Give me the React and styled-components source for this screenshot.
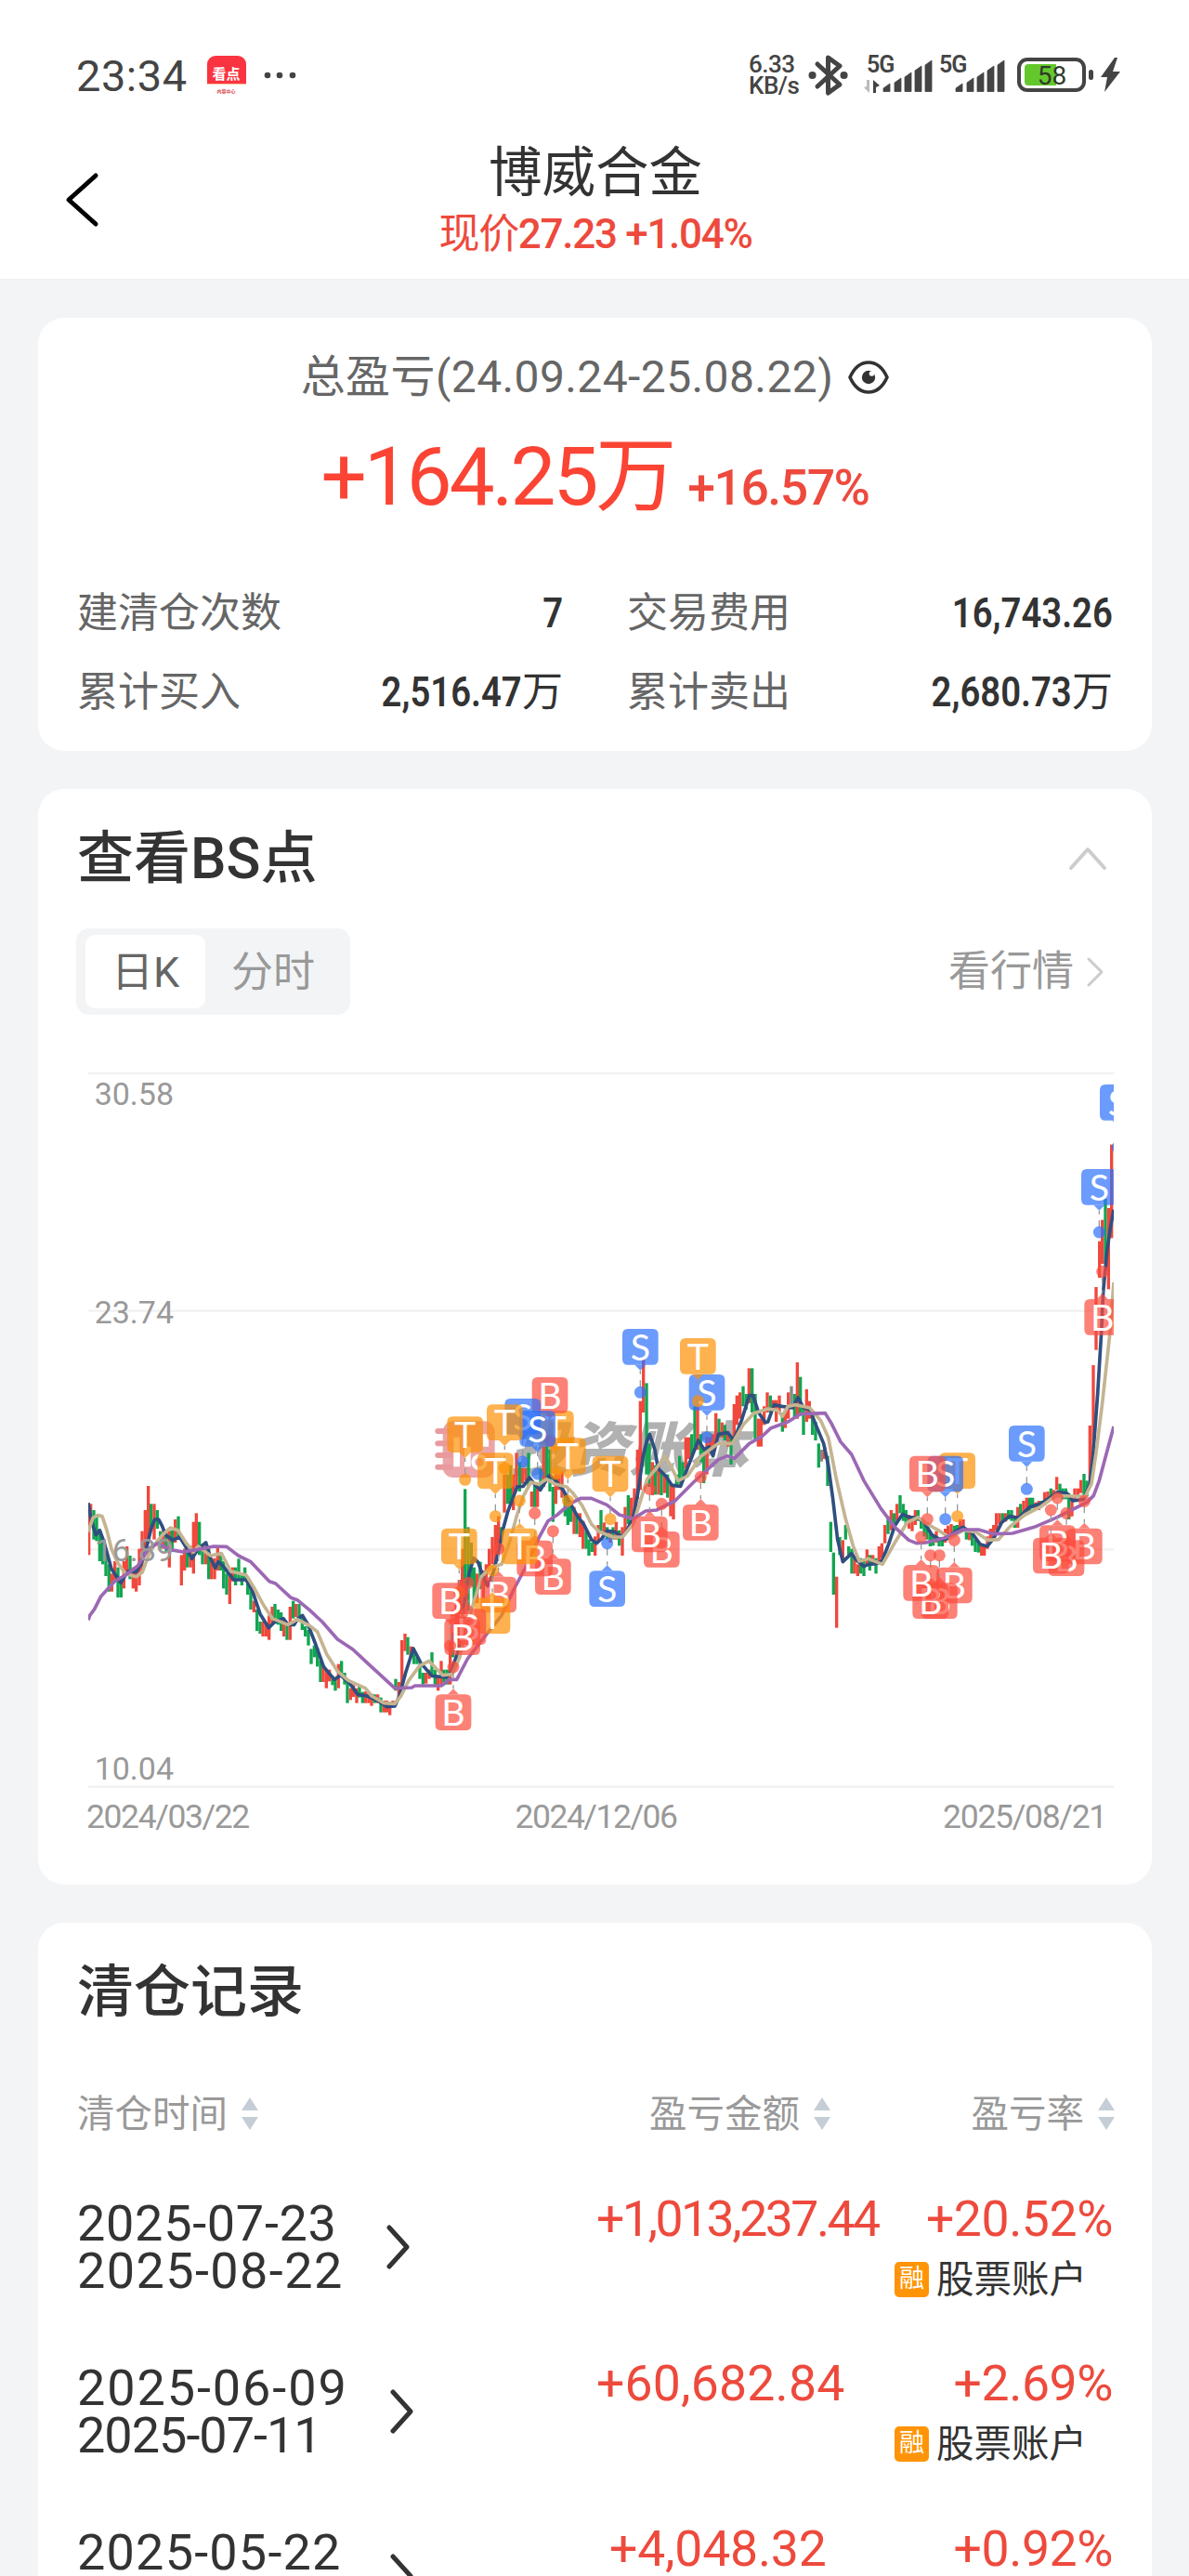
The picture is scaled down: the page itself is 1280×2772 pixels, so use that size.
import React from "react";
import styled, { createGlobalStyle } from "styled-components";

const GlobalStyle = createGlobalStyle`
  * {
    box-sizing: border-box;
  }
  body {
    margin: 0;
    background: #f3f4f6;
    font-family: Roboto, "Noto Sans CJK SC", sans-serif;
    color: #333;
  }
`;

const RED = "#ed4a3d";

const Screen = styled.div`
  width: 1280px;
  height: 2772px;
  overflow: hidden;
  background: #f3f4f6;
`;

const Text = styled.span`
  white-space: nowrap;
  font-size: ${props => props.$size}px;
  line-height: ${props => props.$line || props.$size + 8}px;
  font-weight: ${props => props.$weight || 400};
  color: ${props => props.$color || "#333"};
  letter-spacing: ${props => props.$ls || 0}px;
`;

/* status bar */

const StatusBar = styled.div`
  height: 140px;
  padding: 22px 73px 0 82px;
  display: flex;
  align-items: center;
  justify-content: space-between;
  background: #fff;
`;

const StatusGroup = styled.div`
  display: flex;
  align-items: center;
`;

const AppIcon = styled.div`
  width: 42px;
  height: 42px;
  margin-left: 21px;
  border-radius: 9px;
  overflow: hidden;
  display: flex;
  flex-direction: column;
  align-items: center;
  background: linear-gradient(#f93440 0 71%, #f9c9a0 71% 75%, #fff 75%);
  color: #fff;
  font: 700 15px/37px "Noto Sans CJK SC", sans-serif;

  small {
    color: #d5434a;
    font-size: 5px;
    line-height: 1px;
  }
`;

const NetSpeed = styled.div`
  display: flex;
  flex-direction: column;
  width: 54px;
  margin-right: 10px;
  font-size: 26px;
  line-height: 23px;
  font-weight: 500;
  color: #444;
  letter-spacing: -0.5px;
`;

const SignalIcon = styled.svg`
  width: 76px;
  height: 42px;
  margin-left: ${props => props.$gap}px;
  overflow: visible;
`;

const BatteryIcon = styled.svg`
  width: 112px;
  height: 42px;
  margin-left: 11px;
`;

/* title bar */

const NavBar = styled.div`
  height: 161px;
  display: grid;
  grid-template-columns: 120px 1fr 118px;
  background: #fff;
  border-bottom: 1px solid #eeeff1;
`;

const Back = styled.div`
  padding: 43px 0 0 68px;
`;

const NavTitle = styled.div`
  padding-top: 14px;
  display: flex;
  flex-direction: column;
  align-items: center;
  gap: 4px;
`;

const Thin = styled.span`
  font-weight: 400;
`;

/* cards */

const Card = styled.section`
  width: 1199px;
  height: ${props => props.$height}px;
  margin: 41px 0 0 41px;
  padding: ${props => props.$top}px 42px 0 42px;
  border-radius: 28px;
  background: #fff;
`;

const Center = styled.div`
  display: flex;
  justify-content: center;
  align-items: ${props => props.$align || "center"};
  gap: ${props => props.$gap}px;
  margin-top: ${props => props.$mt || 0}px;
`;

const Stats = styled.div`
  margin-top: 54px;
  display: grid;
  grid-template-columns: 523px 523px;
  grid-auto-rows: 85px;
  column-gap: 69px;
`;

const Stat = styled.div`
  display: flex;
  align-items: center;
  justify-content: space-between;
`;

const ValueBox = styled.div`
  display: flex;
  align-items: baseline;
`;

const Value = styled(Text)`
  transform: scaleX(0.87);
  transform-origin: right;
`;

const CardHead = styled.div`
  height: 80px;
  display: flex;
  align-items: center;
  justify-content: space-between;
  padding: 4px 5px 0 0;
`;

const Toolbar = styled.div`
  margin: 37px 0 62px -1px;
  padding-right: 9px;
  display: flex;
  align-items: center;
  justify-content: space-between;
`;

const Tabs = styled.div`
  width: 295px;
  height: 93px;
  padding: 7px 10px;
  display: flex;
  border-radius: 14px;
  background: #f3f4f6;
`;

const Tab = styled.div`
  width: ${props => (props.$active ? 129 : 146)}px;
  padding-top: 2px;
  display: flex;
  align-items: center;
  justify-content: center;
  border-radius: 10px;
  background: ${props => (props.$active ? "#fff" : "transparent")};
`;

const More = styled.div`
  display: flex;
  align-items: center;
  gap: 13px;
`;

const Plot = styled.svg`
  display: block;
  width: 1104px;
  height: 770px;
  margin-left: 12px;
`;

const Dates = styled.div`
  margin: 10px 7px 0 10px;
  display: flex;
  justify-content: space-between;
`;

const HeadRow = styled.div`
  height: 60px;
  margin: 63px -2px 0 0;
  display: grid;
  grid-template-columns: 616px 1fr auto;
`;

const HeadCell = styled.div`
  display: flex;
  align-items: center;
  gap: 15px;
`;

const Rows = styled.div`
  margin-top: 55px;
`;

const Row = styled.div`
  height: 177.33px;
  display: grid;
  grid-template-columns: 559px 1fr auto;
`;

const Period = styled.div`
  height: 109px;
  padding-top: 6px;
  display: flex;
  align-items: center;
  gap: 46px;
`;

const PeriodDates = styled.div`
  width: ${props => props.$width}px;
  height: 102px;
  display: flex;
  flex-direction: column;
`;

const Amount = styled.div`
  padding-left: ${props => props.$indent || 0}px;
`;

const Rate = styled.div`
  display: flex;
  flex-direction: column;
  align-items: flex-end;
`;

const Account = styled.div`
  margin: 18px 28px 0 0;
  height: 38px;
  display: flex;
  align-items: center;
  gap: 8px;
`;

const MarginTag = styled.span`
  width: 37px;
  height: 38px;
  border-radius: 5px;
  background: #ff9406;
  color: #fff;
  font-size: 27px;
  line-height: 37px;
  text-align: center;
`;

/* icons */

function Chevron({ w, h, points, color, width }) {
  return (
    <svg width={w} height={h} fill="none" stroke={color} strokeWidth={width} strokeLinecap="round" strokeLinejoin="round">
      <polyline points={points} />
    </svg>
  );
}

function Sort() {
  return (
    <svg width="18" height="36" fill="#c5ced6">
      <path d="M9 0L18 14H0zM9 35L18 21H0z" />
    </svg>
  );
}

function Eye() {
  return (
    <svg width="44" height="38" viewBox="0 0 44 38">
      <path d="M2 19C7 8 14 3 22 3s15 5 20 16c-5 11-12 16-20 16S7 30 2 19z" fill="none" stroke="#333" strokeWidth="3.6" strokeLinejoin="round" />
      <circle cx="22" cy="19" r="7.2" fill="#333" />
      <circle cx="25.5" cy="15" r="2.8" fill="#fff" />
    </svg>
  );
}

function Bluetooth() {
  return (
    <svg width="44" height="46" viewBox="0 0 44 46" fill="none" stroke="#444" strokeWidth="5" strokeLinejoin="round" strokeLinecap="round">
      <path d="M10 11L34 33 21.500 42V4L34 13 10 35" />
      <path d="M4.500 23h.1M38.500 23h.1" strokeWidth="8" />
    </svg>
  );
}

function Signal({ arrows, gap }) {
  return (
    <SignalIcon $gap={gap} viewBox="0 0 76 42" fill="#444">
      <text x="3" y="18" fontSize="25" fontWeight="600" letterSpacing="-1">5G</text>
      {arrows && <path d="M6 26v14L0 34l3-1v-7z" fill="#bbb" />}
      {arrows && <path d="M10 40V26l7 6-4 2v6z" />}
      {[[21, 30], [33, 24], [44, 18], [55, 11], [66, 5]].map(([x, y]) => (
        <path key={x} d={`M${x} ${y + 5}L${x + 7} ${y}V38.500H${x}z`} stroke="#444" strokeWidth="0.800" strokeLinejoin="round" />
      ))}
    </SignalIcon>
  );
}

function Battery() {
  return (
    <BatteryIcon viewBox="0 0 112 42">
      <rect x="2" y="4" width="70" height="33" rx="9" fill="none" stroke="#444" strokeWidth="4" />
      <path d="M12 9H42V32H12Q8 32 8 28V13Q8 9 12 9z" fill="#64c82d" />
      <rect x="77" y="15" width="5" height="11" rx="2.500" fill="#444" />
      <text x="37.500" y="30.500" fontSize="28" fill="#2f3a28" textAnchor="middle">58</text>
      <path d="M105 2L90 23h7l-3 16 17-22h-8l5-15z" fill="#444" />
    </BatteryIcon>
  );
}

/* chart, three plot units to one pixel, the history comes in three parts */

const parts = [
  {
    dx: -45,
    bars: `47,655,820,r 53,655,730,r 63,675,770,g 72,690,775,g 82,740,840,g 92,780,850,g 102,800,888,g 112,850,938,g 121,880,938,r
      131,840,900,r 141,860,957,g 151,890,957,g 160,840,928,r 170,792,880,r 180,822,898,g 190,860,928,r 200,865,938,r 210,800,918,r
      219,743,870,r 229,675,800,r 239,597,780,r 248,655,740,g 258,655,770,r 268,675,735,g 278,743,800,g 288,740,800,r 297,740,810,g
      307,742,860,r 316,740,810,g 326,705,780,r 336,695,760,g 346,820,918,r 356,800,870,r 365,800,860,g 375,790,860,r 385,713,880,r
      394,685,800,r 404,713,820,g 414,790,850,g 424,800,850,r 434,800,898,g 443,840,898,r 453,830,898,r 463,795,870,r 473,810,870,g
      482,840,928,g 492,880,948,g 502,880,978,r 512,860,905,r 521,860,918,g 531,832,900,g 541,880,918,g 551,860,900,g 560,890,948,g
      570,910,996,g 580,968,1005,r 590,996,1065,g 600,1035,1074,g 609,1035,1083,r 619,1040,1083,r 629,1015,1094,r 639,987,1040,r
      648,978,1035,g 658,996,1045,g 668,1005,1065,g 677,1030,1083,r 687,1040,1094,g 697,987,1094,r 707,968,1025,g 716,978,1020,r
      726,978,1035,g 736,1020,1062,g 746,1050,1083,g 756,1062,1112,g 765,1123,1172,g 775,1112,1150,g 785,1120,1180,g 795,1160,1230,g
      804,1180,1230,r 814,1190,1250,r 824,1190,1228,r 834,1210,1240,g 843,1220,1258,g 853,1172,1250,r 863,1162,1215,g 873,1200,1238,g
      882,1220,1298,g 892,1250,1288,r 902,1240,1278,r 912,1250,1298,r 921,1240,1280,g 931,1262,1298,g 941,1260,1298,r 951,1260,1298,r
      960,1268,1307,r 970,1270,1298,g 980,1270,1298,r 990,1280,1328,g 1000,1290,1328,r 1009,1290,1328,r 1019,1295,1337,r 1029,1290,1310,r
      1038,1220,1258,g 1048,1230,1280,r 1058,1095,1240,r 1068,1074,1130,r 1077,1085,1142,g 1087,1115,1150,r 1097,1130,1172,g 1107,1150,1172,g
      1116,1172,1220,g 1126,1200,1238,g 1136,1200,1235,r 1146,1190,1220,r 1155,1134,1210,g 1165,1190,1238,g 1175,1210,1258,r 1185,1162,1238,r 1194,1190,1230,g`,
    ma5: `45,652 55,710 70,755 82,740 95,775 120,865 150,910 165,885 175,872 200,875 215,850 235,790 248,735 260,705 272,705 283,725
      295,755 318,772 340,762 355,785 380,832 400,800 425,780 440,830 455,862 465,842 480,855 515,900 555,900 575,935 600,1010 628,1055
      645,1038 675,1025 690,1045 710,1045 722,1025 737,1015 755,1045 780,1110 805,1180 840,1222 860,1208 890,1235 915,1270 945,1275
      980,1290 1010,1310 1035,1308 1050,1275 1070,1200`,
    ma10: `45,745 60,700 75,692 90,695 105,740 120,800 140,845 165,880 200,890 220,875 240,820 260,785 285,755 310,732 335,740 360,780
      385,810 400,792 440,822 475,815 505,872 555,885 580,925 610,980 640,1025 690,1045 720,1028 760,1048 785,1068 815,1140 850,1195
      885,1225 940,1250 960,1275 1000,1298 1035,1300 1055,1275 1080,1225 1115,1178`,
    ma20: `45,1030 50,1015 65,995 85,955 130,905 165,885 205,855 240,800 270,782 310,803 350,810 400,802 450,792 492,793 530,822 570,842
      630,905 650,912 700,958 720,965 760,998 800,1035 850,1092 900,1125 950,1172 1035,1250 1090,1248 1100,1242 1185,1242`
  },
  {
    dx: 1035,
    bars: `124,1190,1238,g 134,1100,1238,r 143,1070,1150,g 153,980,1130,r 163,900,1100,r 173,800,1050,r 182,607,950,g 192,730,1000,g
      202,780,920,g 211,860,975,g 221,880,975,r 231,842,930,g 241,870,960,r 250,850,920,r 260,800,870,r 270,762,850,r 280,723,850,r
      290,695,800,r 299,730,780,g 309,560,683,r 319,560,655,g 329,530,655,g 338,560,675,r 348,490,600,r 358,520,615,g 368,540,590,r
      378,540,580,r 387,490,600,g 397,615,665,r 407,590,665,g 416,600,665,r 426,540,610,g 436,470,600,r 446,440,580,g 456,480,615,g
      466,600,713,g 475,560,655,r 485,560,610,r 495,550,635,r 505,620,695,g 514,640,723,g 524,660,713,g 534,665,752,r 543,685,752,g
      553,685,762,r 563,710,800,r 573,740,800,g 582,770,822,g 592,780,810,g 602,760,822,r 612,723,780,r 621,675,745,g 631,715,760,r
      641,730,770,g 651,740,780,r 660,730,770,g 670,713,770,r 680,740,790,g 690,730,822,r 699,665,752,r 709,627,720,g 719,635,700,r
      729,605,680,r 739,480,640,r 748,323,610,r 758,180,360,r 768,265,560,g 777,460,600,g 787,520,627,r 797,530,625,g 807,530,625,r
      816,550,627,g 826,560,620,r 836,560,635,g 846,590,695,r 855,590,705,r 865,560,600,g 875,500,590,g 885,520,570,g 895,440,540,r
      904,440,510,r 914,430,500,g 924,340,480,g 933,340,480,r 943,430,520,g 953,480,588,g 963,440,560,r 973,440,490,r 982,430,500,r
      992,362,460,r 1002,380,440,g 1012,392,440,r 1021,400,450,g 1031,420,470,r 1041,440,528,g 1051,333,440,r 1060,305,400,r
      1070,295,380,r 1080,275,340,g 1090,300,350,g 1099,217,330,r 1109,217,360,g 1119,300,450,g 1129,380,470,r 1138,380,470,r
      1148,340,400,r 1158,295,360,r 1168,305,360,g 1177,320,350,r 1187,320,390,r 1197,305,360,r`,
    ma5: `15,1122 40,1170 75,1210 120,1215 135,1200 160,1130 180,970 195,880 210,830 225,845 240,890 255,920 272,880 290,810 305,735
      320,680 350,600 370,598 390,570 405,590 425,610 455,562 475,580 500,612 520,650 545,695 565,720 590,770 607,782 625,765 640,742
      665,745 690,762 705,740 725,700 740,620 757,500 768,455 778,430 795,480 805,540 830,565 850,595 878,598 900,540 935,450 955,480
      970,470 983,500 1000,430 1030,425 1050,450 1075,385 1100,305 1112,305 1130,360 1152,392`,
    ma10: `65,1162 110,1208 140,1205 165,1150 185,1060 205,990 235,890 265,860 300,850 325,780 350,690 370,630 395,585 420,592 445,575
      470,590 510,600 530,620 560,660 590,720 615,745 660,762 690,762 725,720 750,640 770,575 800,540 827,500 845,530 870,580 900,565
      945,500 1000,460 1045,460 1080,400 1115,362 1160,348`,
    ma20: `115,1235 130,1222 155,1222 190,1155 240,1090 300,1015 340,930 380,855 420,765 450,710 480,690 520,655 555,637 590,637 640,658
      680,690 725,703 765,678 800,675 860,645 920,585 1000,512 1030,500 1052,508 1100,460`
  },
  {
    dx: 2175,
    bars: `67,360,422,g 76,350,410,r 86,295,380,r 96,275,340,n 106,300,380,g 115,198,380,r 125,245,370,g 135,345,432,g 145,285,390,r
      154,323,380,r 164,360,432,g 174,390,450,g 184,460,538,g 193,480,518,n 203,470,510,r 213,500,597,g 223,713,810,g 232,812,948,g
      242,890,1055,r 252,762,820,g 262,772,840,r 271,723,770,g 281,792,820,g 291,800,880,g 300,830,880,r 310,850,888,r 320,830,880,g
      330,840,888,g 340,802,850,r 349,820,870,g 359,820,850,r 369,830,880,g 379,792,850,r 388,782,830,r 398,723,782,r 408,695,752,g
      418,675,740,r 427,685,730,g 437,655,710,r 447,627,685,g 457,655,710,g 466,675,723,g 476,690,735,r 486,700,743,r 496,675,723,r
      505,675,710,g 515,700,735,g 525,720,760,g 534,715,770,g 544,743,792,g 554,760,790,g 564,743,780,r 573,762,792,g 583,770,792,g
      593,735,780,r 602,725,770,r 612,720,760,r 622,725,760,g 632,723,752,g 641,705,740,r 651,705,745,r 661,735,770,g 671,745,772,r
      680,752,790,g 690,770,810,g 700,780,812,g 710,790,822,r 719,790,822,r 729,760,800,r 739,735,772,r 749,723,770,r 758,685,740,r
      768,685,720,r 778,685,712,g 788,685,712,r 797,675,705,g 807,675,710,g 817,700,732,g 827,665,732,r 836,655,700,g 846,645,690,r
      856,635,680,r 866,635,680,g 875,635,670,g 885,650,670,r 895,645,675,r 904,645,665,g 914,617,660,r 924,615,650,r 934,605,640,g
      943,610,640,r 953,568,610,r 963,590,630,g 972,605,640,g 982,605,640,g 992,620,705,g 1002,640,695,r 1011,605,640,r 1021,605,630,r
      1031,578,620,r 1041,558,640,g 1050,580,630,g 1060,402,600,r 1071,207,500,r 1080,-45,158,r 1091,-193,-75,r 1100,-262,-120,r
      1110,-330,-120,g 1120,-300,-38,r 1130,-505,-203,r`,
    ma5: `20,390 40,335 65,340 100,345 117,312 135,345 155,350 175,400 200,460 215,530 230,640 245,770 262,842 290,815 305,835 330,857
      345,850 370,848 388,840 410,785 430,725 455,688 475,698 505,700 525,715 550,755 575,770 598,768 620,748 650,730 680,750 705,785
      728,792 750,765 775,715 800,695 830,700 865,665 900,655 930,635 955,617 985,620 1005,645 1040,640 1060,590 1070,500 1085,300
      1097,100 1103,-30 1115,-160 1125,-230 1137,-295`,
    ma10: `50,352 67,372 85,340 110,335 155,345 190,385 215,440 240,570 270,700 295,790 315,840 345,832 390,850 430,780 470,715 505,698
      535,720 570,740 610,765 650,740 690,745 730,772 765,770 800,730 850,690 900,665 950,628 1000,630 1045,630 1065,590 1080,490
      1100,330 1125,100 1137,-60`,
    ma20: `0,438 30,410 85,390 125,365 205,362 225,395 255,455 290,495 330,580 385,670 430,730 475,772 500,782 530,780 590,765 650,738
      700,738 750,752 810,750 880,730 950,700 1000,675 1050,650 1072,628 1090,580 1110,505 1137,405`
  }
];

const parse = (dx, str) =>
  str.trim().split(/\s+/).map(item => {
    const [x, ...rest] = item.split(",");
    return [Number(x) + dx, ...rest];
  });

const bars = parts.flatMap(p => parse(p.dx, p.bars));
const line = key => parts.flatMap(p => parse(p.dx, p[key])).map(p => p.join(",")).join(" ");

const barColors = { r: "#f0483c", g: "#12a551", n: "#888" };
const markColors = { B: "#fc4c3e", S: "#2d72fb", T: "#fd9105" };

// type, x, label center, trade price; later marks lie on top
const marks = [
  ["S", 3325, -641, -497],
  ["B", 3275, 52, -95],
  ["S", 3265, -368, -222],
  ["B", 3217, 792, 646],
  ["B", 3159, 830, 685],
  ["B", 3130, 782, 636],
  ["B", 3109, 822, 675],
  ["S", 3031, 460, 607],
  ["T", 2807, 548, 695],
  ["B", 2797, 918, 772],
  ["S", 2768, 558, 704],
  ["B", 2749, 968, 821],
  ["B", 2720, 968, 821],
  ["B", 2710, 558, 704],
  ["B", 2690, 910, 762],
  ["S", 1998, 295, 440],
  ["B", 1978, 715, 568],
  ["T", 1969, 178, 323],
  ["B", 1852, 802, 655],
  ["B", 1813, 753, 607],
  ["S", 1783, 148, 295],
  ["T", 1686, 558, 704],
  ["S", 1676, 929, 782],
  ["T", 1510, 412, 558],
  ["T", 1549, 500, 645],
  ["B", 1501, 890, 743],
  ["B", 1491, 304, 450],
  ["B", 1442, 831, 685],
  ["S", 1403, 373, 519],
  ["S", 1451, 412, 558],
  ["T", 1393, 792, 645],
  ["T", 1345, 392, 540],
  ["B", 1325, 948, 800],
  ["T", 1315, 548, 695],
  ["T", 1305, 1016, 870],
  ["B", 1227, 1052, 910],
  ["T", 1217, 431, 577],
  ["B", 1208, 1085, 940],
  ["T", 1198, 792, 940],
  ["B", 1179, 1328, 1182],
  ["B", 1169, 968, 1113]
];

function Mark({ type, x, y, price }) {
  const dir = price > y ? 1 : -1;
  const edge = y + dir * 58;
  return (
    <g>
      <line x1={x} x2={x} y1={edge + dir * 18} y2={price} stroke="#999" strokeWidth="4" strokeDasharray="12 20 22 20" />
      <g fill={markColors[type]} opacity="0.7">
        <circle cx={x} cy={price} r="19.500" />
        <path d={`M${x - 58} ${y - 40}q0-18 18-18h80q18 0 18 18v80q0 18-18 18h-80q-18 0-18-18z`} />
        <path d={`M${x - 18} ${edge}h36l-18 ${dir * 18}z`} />
      </g>
      <text x={x} y={y + 43} fontSize="118" fontFamily="Lato" fill="#fff" textAnchor="middle">{type}</text>
    </g>
  );
}

function Watermark() {
  return (
    <g>
      <rect x="1145" y="388" width="168" height="182" rx="34" fill="#eba5a8" />
      <path d="M1129 420h40M1129 460h40M1129 498h40M1129 536h40" stroke="#e99a9f" strokeWidth="18" strokeLinecap="round" />
      <path d="M1190 440v95M1225 470v65M1283 430v40" stroke="#fff" strokeWidth="20" />
      <circle cx="1263" cy="520" r="20" fill="none" stroke="#fff" strokeWidth="12" />
      <text x="1362" y="550" fontSize="192" fontWeight="900" fontStyle="italic" fontFamily="Noto Sans CJK SC" fill="#b1b1b1">投资账本</text>
    </g>
  );
}

function Chart() {
  return (
    <Plot viewBox="0 -738 3312 2310">
      {[-735, 32, 802, 1568].map(y => (
        <line key={y} x1="0" x2="3312" y1={y} y2={y} stroke="#f1f1f1" strokeWidth="7" />
      ))}
      <Watermark />
      {bars.map(([x, top, bottom, c]) => (
        <rect key={x} x={x - 5} y={top} width="10" height={bottom - top} fill={barColors[c]} />
      ))}
      <g fill="none" strokeWidth="11" strokeLinejoin="round">
        <polyline points={line("ma5")} stroke="#2f4f80" />
        <polyline points={line("ma10")} stroke="#c5b491" />
        <polyline points={line("ma20")} stroke="#9c68b4" />
      </g>
      <g fontSize="102" fill="#999">
        <text x="20" y="-634">30.58</text>
        <text x="20" y="72">23.74</text>
        <text x="20" y="840">16.89</text>
        <text x="20" y="1545">10.04</text>
      </g>
      {marks.map(([type, x, y, price]) => (
        <Mark key={x} type={type} x={x} y={y} price={price} />
      ))}
    </Plot>
  );
}

const stats = [
  ["建清仓次数", "7"],
  ["交易费用", "16,743.26"],
  ["累计买入", "2,516.47", "万"],
  ["累计卖出", "2,680.73", "万"]
];

// each date goes with its tracking
const records = [
  { dates: [["2025-07-23", 0.7], ["2025-08-22", 1.4]], width: 287, amount: "+1,013,237.44", ls: -2.5, rate: "+20.52%" },
  { dates: [["2025-06-09", 1.9], ["2025-07-11", -1]], width: 291, amount: "+60,682.84", ls: 0.2, rate: "+2.69%" },
  { dates: [["2025-05-22", 1.2]], width: 291, amount: "+4,048.32", ls: -0.2, indent: 14, rate: "+0.92%" }
];

function App() {
  return (
    <Screen>
      <GlobalStyle />
      <StatusBar>
        <StatusGroup>
          <Text $size={47} $color="#444" $ls={0.5}>23:34</Text>
          <AppIcon>看点<small>内容中心</small></AppIcon>
          <svg width="60" height="8" fill="#444">
            <circle cx="23" cy="4" r="3.300" />
            <circle cx="36" cy="4" r="3.300" />
            <circle cx="50" cy="4" r="3.300" />
          </svg>
        </StatusGroup>
        <StatusGroup>
          <NetSpeed>
            <span>6.33</span>
            <span>KB/s</span>
          </NetSpeed>
          <Bluetooth />
          <Signal arrows gap={16} />
          <Signal gap={2} />
          <Battery />
        </StatusGroup>
      </StatusBar>
      <NavBar>
        <Back>
          <Chevron w={40} h={64} points="35,6 6,32 35,58" color="#000" width={5} />
        </Back>
        <NavTitle>
          <Text $size={57.5} $line={66}>博威合金</Text>
          <Text $size={44} $line={56} $color={RED} $weight={500} $ls={-1.3}><Thin>现价</Thin>27.23 +1.04%</Text>
        </NavTitle>
      </NavBar>

      <Card $height={466} $top={32}>
        <Center $gap={16}>
          <Text $size={48} $line={64} $color="#666" $ls={0.4}>总盈亏(24.09.24-25.08.22)</Text>
          <Eye />
        </Center>
        <Center $gap={15} $align="baseline" $mt={25}>
          <Text $size={87} $line={100} $color="#fb4434" $ls={-3}>+164.25万</Text>
          <Text $size={53.5} $line={60} $color={RED} $weight={500} $ls={-1.5}>+16.57%</Text>
        </Center>
        <Stats>
          {stats.map(([label, value, unit]) => (
            <Stat key={label}>
              <Text $size={44} $color="#666">{label}</Text>
              <ValueBox>
                <Value $size={44} $weight={600}>{value}</Value>
                {unit && <Text $size={44} $weight={400}>{unit}</Text>}
              </ValueBox>
            </Stat>
          ))}
        </Stats>
      </Card>

      <Card $height={1179} $top={33}>
        <CardHead>
          <Text $size={61} $weight={500}>查看BS点</Text>
          <Chevron w={44} h={28} points="4,24 22,4 40,24" color="#ccc" width={4} />
        </CardHead>
        <Toolbar>
          <Tabs>
            <Tab $active><Text $size={45} $color="#666">日K</Text></Tab>
            <Tab><Text $size={45} $color="#999">分时</Text></Tab>
          </Tabs>
          <More>
            <Text $size={45} $color="#999">看行情</Text>
            <Chevron w={20} h={34} points="3,3 17,17 3,31" color="#ccc" width={3} />
          </More>
        </Toolbar>
        <Chart />
        <Dates>
          <Text $size={35.5} $line={42} $color="#999" $ls={-1.4}>2024/03/22</Text>
          <Text $size={35.5} $line={42} $color="#999" $ls={-1.5}>2024/12/06</Text>
          <Text $size={35.5} $line={42} $color="#999" $ls={-1.3}>2025/08/21</Text>
        </Dates>
      </Card>

      <Card $height={740} $top={33}>
        <CardHead>
          <Text $size={61} $weight={500}>清仓记录</Text>
        </CardHead>
        <HeadRow>
          {["清仓时间", "盈亏金额", "盈亏率"].map(name => (
            <HeadCell key={name}>
              <Text $size={40.5} $color="#999">{name}</Text>
              <Sort />
            </HeadCell>
          ))}
        </HeadRow>
        <Rows>
          {records.map(({ dates, width, amount, ls, indent, rate }) => (
            <Row key={amount}>
              <Period>
                <PeriodDates $width={width}>
                  {dates.map(([d, tracking]) => (
                    <Text key={d} $size={54} $line={51} $ls={tracking}>{d}</Text>
                  ))}
                </PeriodDates>
                <Chevron w={28} h={54} points="3,6 22,27 3,48" color="#333" width={5} />
              </Period>
              <Amount $indent={indent}>
                <Text $size={53.5} $line={56} $color={RED} $ls={ls}>{amount}</Text>
              </Amount>
              <Rate>
                <Text $size={53.5} $line={56} $color={RED} $ls={-0.4}>{rate}</Text>
                <Account>
                  <MarginTag>融</MarginTag>
                  <Text $size={40.5} $line={38}>股票账户</Text>
                </Account>
              </Rate>
            </Row>
          ))}
        </Rows>
      </Card>
    </Screen>
  );
}

export default App;
